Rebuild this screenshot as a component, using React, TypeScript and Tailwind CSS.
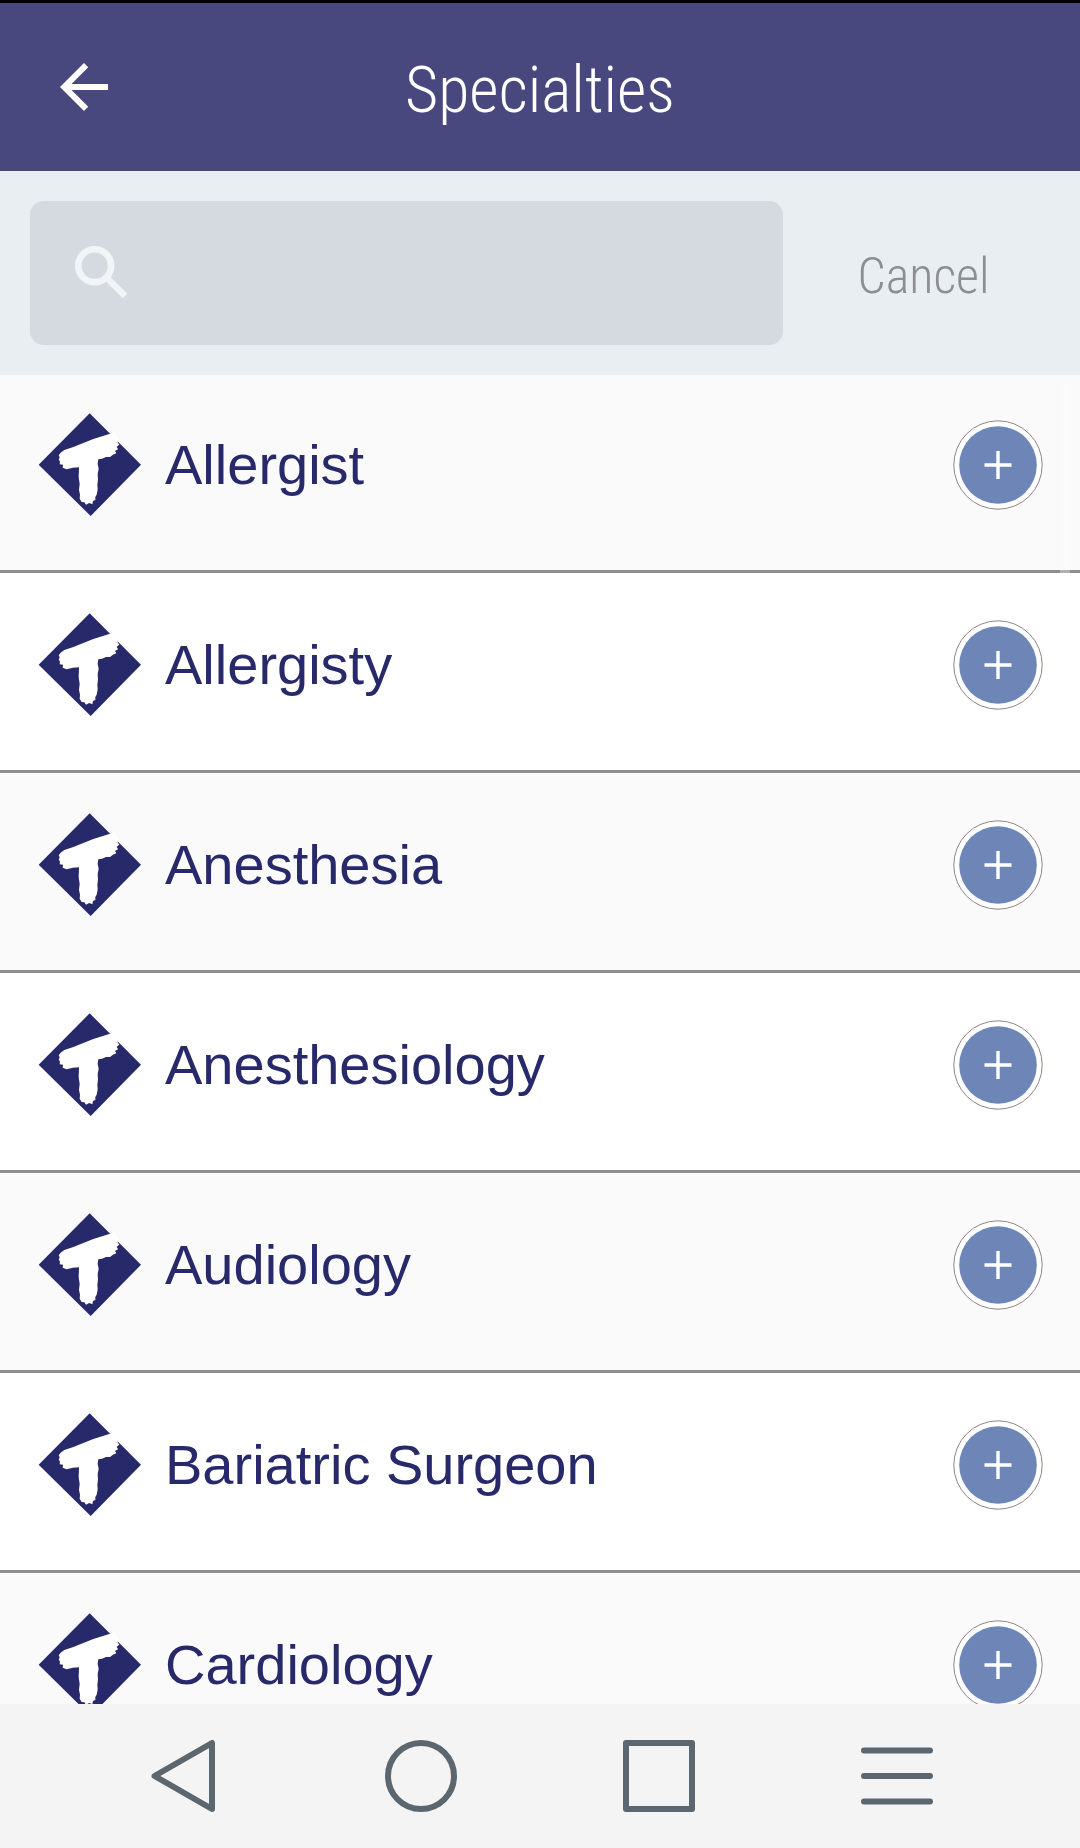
import { MdArrowBack } from "react-icons/md";

const specialties = [
  { id: 1, name: "Allergist" },
  { id: 2, name: "Allergisty" },
  { id: 3, name: "Anesthesia" },
  { id: 4, name: "Anesthesiology" },
  { id: 5, name: "Audiology" },
  { id: 6, name: "Bariatric Surgeon" },
  { id: 7, name: "Cardiology" },
];

function BrandMark() {
  return (
    <svg viewBox="24 36 312 318" className="w-[104px] h-[106px] shrink-0" aria-hidden="true">
      <path d="M179 40 L333 194 L182 348 L26 194 Z" fill="#28296a" />
      <path
        d="M240 101 L254 97 L264 110 L270 122 L262 125 L268 134 L260 140 L264 148 L255 153 L259 160 L249 164 L240 171 L228 171 L216 176 L205 178 L203 192 L206 206 L203 222 L204 238 L202 254 L203 268 L200 284 L196 291 L196 300 L189 303 L187 313 L178 309 L168 314 L163 307 L155 306 L149 296 L150 284 L147 270 L149 252 L146 232 L147 202 L128 203 L110 208 L98 203 L99 194 L89 193 L90 184 L86 180 L89 172 L86 166 L92 158 L103 150 L130 141 L160 129 L190 117 Z"
        fill="#fff"
      />
    </svg>
  );
}

function SearchIcon() {
  return (
    <svg viewBox="0 0 54 54" className="w-[54px] h-[54px] shrink-0" fill="none" stroke="#f2f5f8" aria-hidden="true">
      <circle cx="20.700" cy="20.700" r="16.400" strokeWidth="6.600" />
      <path d="M34 34 L51 51" strokeWidth="6.600" />
    </svg>
  );
}

function AddButton({ label }: { label: string }) {
  return (
    <button type="button" aria-label={label} className="w-[90px] h-[90px] shrink-0">
      <svg viewBox="0 0 90 90" className="w-full h-full">
        <circle cx="45" cy="45" r="44.200" fill="#fff" stroke="#8f8683" strokeWidth="1" />
        <circle cx="45" cy="45" r="38.800" fill="#6e86b7" />
        <path d="M31.500 45 H58.500 M45 31 V59" stroke="#fff" strokeWidth="3.400" />
      </svg>
    </button>
  );
}

function NavBar() {
  const items = [
    { id: "back", label: "Back", shape: <path d="M10.500 39 L68 6 V72 Z" /> },
    { id: "home", label: "Home", shape: <circle cx="39" cy="39" r="33" /> },
    { id: "recent", label: "Recent apps", shape: <rect x="6" y="6" width="66" height="66" /> },
    { id: "menu", label: "Menu", shape: <path d="M6 13.500 H72 M6 39 H72 M6 64.500 H72" /> },
  ];

  return (
    <nav className="flex h-36 shrink-0 bg-[#f4f4f4] px-16">
      {items.map((item) => (
        <button
          key={item.id}
          type="button"
          aria-label={item.label}
          className="flex flex-1 items-center justify-center"
        >
          <svg
            viewBox="0 0 78 78"
            className="w-[78px] h-[78px]"
            fill="none"
            stroke="#5b666e"
            strokeWidth="6"
            strokeLinecap="round"
            strokeLinejoin="round"
          >
            {item.shape}
          </svg>
        </button>
      ))}
    </nav>
  );
}

export default function App() {
  return (
    <div className="flex h-screen flex-col bg-[#fafafa] font-['Liberation_Sans',Arial,sans-serif]">
      <header className="grid h-[171px] shrink-0 grid-cols-[1fr_auto_1fr] items-center border-t-[3px] border-black bg-[#48487f] px-12 font-['Roboto_Condensed',Roboto,sans-serif] text-white">
        <button type="button" aria-label="Go back" className="w-18 h-18">
          <MdArrowBack className="w-full h-full" />
        </button>
        <h1 className="pt-2 text-[64px] leading-[80px] font-light">Specialties</h1>
      </header>

      <form className="flex h-[204px] shrink-0 items-center bg-[#e9eef2] pl-[30px]">
        <div className="flex h-36 min-w-0 flex-1 items-center gap-4 rounded-[14px] bg-[#d5dae1] pr-8 pb-0.5 pl-11">
          <SearchIcon />
          <input
            type="text"
            aria-label="Search specialties"
            className="min-w-0 flex-1 bg-transparent text-[50px] text-[#28296a] outline-none"
          />
        </div>
        <button
          type="button"
          className="mr-4 w-[281px] shrink-0 pt-1.5 font-['Roboto_Condensed',Roboto,sans-serif] text-[50px] leading-[60px] font-light text-[#8c8e93]"
        >
          Cancel
        </button>
      </form>

      <main className="relative min-h-0 flex-1 overflow-hidden">
        <ul className="h-full overflow-y-auto [scrollbar-width:none]">
          {specialties.map((item) => (
            <li
              key={item.id}
              className="flex items-start border-b-[3px] border-[#8e8e8e] bg-white pt-[47px] pb-[60px] pr-[37px] pl-[38px] odd:bg-[#fafafa] first:pt-[45px]"
            >
              <div className="flex h-[90px] flex-1 items-center gap-[23px]">
                <BrandMark />
                <span className="flex-1 text-[56px] leading-[64px] text-[#28296a]">{item.name}</span>
                <AddButton label={`Add ${item.name}`} />
              </div>
            </li>
          ))}
        </ul>
        {/* scroll thumb */}
        <div className="pointer-events-none absolute top-2 right-0 h-[191px] w-5 border-r-[10px] border-transparent bg-white/30 bg-clip-padding" />
      </main>

      <NavBar />
    </div>
  );
}
